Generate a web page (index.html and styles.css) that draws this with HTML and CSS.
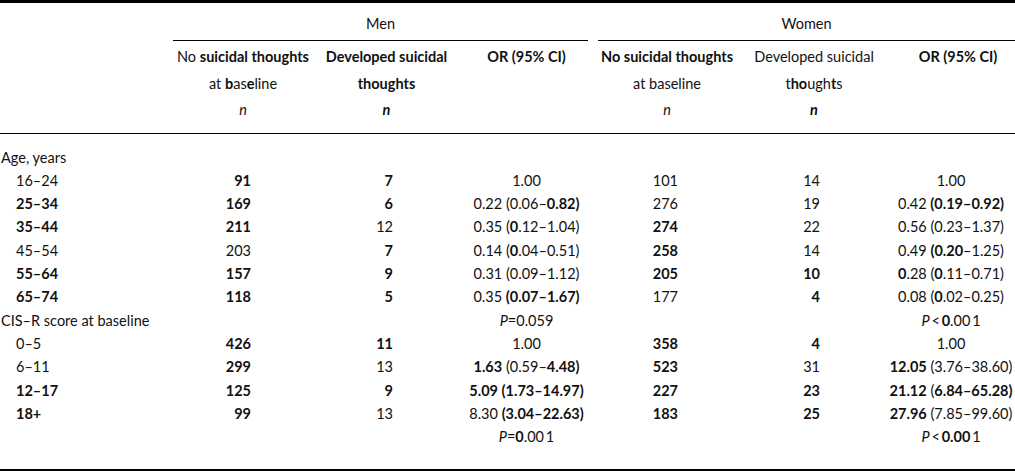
FILE: index.html
```html
<!DOCTYPE html>
<html>
<head>
<meta charset="utf-8">
<link rel="stylesheet" href="styles.css">
</head>
<body>
<table class="tbl">
  <colgroup>
    <col class="c0"><col class="c1"><col class="c2"><col class="c3"><col class="c4"><col class="c5"><col class="c6">
  </colgroup>
  <thead>
    <tr class="grp">
      <th></th>
      <th colspan="3"><div class="grp-men">Men</div></th>
      <th colspan="3"><div class="grp-women">Women</div></th>
    </tr>
    <tr class="sub">
      <th></th>
      <th class="h1">No <b>suicidal thoughts</b><br>at <b>b</b>as<b>e</b>line<br><i>n</i></th>
      <th class="h2"><b>Developed suicidal</b><br><b>thoughts</b><br><i class="bi">n</i></th>
      <th class="h3"><b>OR (95% CI)</b></th>
      <th class="h4"><b>No suicidal thoughts</b><br>at baseline<br><i>n</i></th>
      <th class="h5">Developed suicidal<br>t<b>ho</b>ugh<b>t</b>s<br><i class="bi">n</i></th>
      <th class="h6"><b>OR (95% CI)</b></th>
    </tr>
  </thead>
  <tbody>
    <tr class="first"><td class="lab">Age, years</td><td></td><td></td><td></td><td></td><td></td><td></td></tr>
    <tr><td class="ind">16–24</td><td class="n1 b">91</td><td class="n2 b">7</td><td class="or1">1.00</td><td class="n4">101</td><td class="n5">14</td><td class="or2">1.00</td></tr>
    <tr><td class="ind b">25–34</td><td class="n1 b">169</td><td class="n2 b">6</td><td class="or1">0.22 (0.06–<b>0.82)</b></td><td class="n4">276</td><td class="n5">19</td><td class="or2">0.42 <b>(0.19–0.92)</b></td></tr>
    <tr><td class="ind b">35–44</td><td class="n1 b">211</td><td class="n2">12</td><td class="or1">0.35 (<b>0</b>.12–1.04)</td><td class="n4 b">274</td><td class="n5">22</td><td class="or2">0.56 (0.23–1.37)</td></tr>
    <tr><td class="ind">45–54</td><td class="n1">203</td><td class="n2 b">7</td><td class="or1">0.14 (<b>0</b>.04–0.51)</td><td class="n4 b">258</td><td class="n5">14</td><td class="or2">0.49 <b>(0.20</b>–1.25)</td></tr>
    <tr><td class="ind b">55–64</td><td class="n1 b">157</td><td class="n2 b">9</td><td class="or1">0.31 (0.09–1.12)</td><td class="n4 b">205</td><td class="n5 b">10</td><td class="or2"><b>0</b>.28 (<b>0</b>.11–0.71)</td></tr>
    <tr><td class="ind b">65–74</td><td class="n1 b">118</td><td class="n2 b">5</td><td class="or1">0.35 <b>(0.07–1.67)</b></td><td class="n4">177</td><td class="n5 b">4</td><td class="or2">0.08 (<b>0</b>.02–0.25)</td></tr>
    <tr><td class="lab">CIS–R score at baseline</td><td></td><td></td><td class="or1"><i>P</i>=0.059</td><td></td><td></td><td class="or2"><i>P</i>&thinsp;&lt;&thinsp;<b>0</b>.00&thinsp;1</td></tr>
    <tr><td class="ind">0–5</td><td class="n1 b">426</td><td class="n2 b">11</td><td class="or1">1.00</td><td class="n4 b">358</td><td class="n5 b">4</td><td class="or2">1.00</td></tr>
    <tr><td class="ind">6–11</td><td class="n1 b">299</td><td class="n2">13</td><td class="or1"><b>1.63</b> (0.59–<b>4.48)</b></td><td class="n4 b">523</td><td class="n5">31</td><td class="or2"><b>12.05</b> (3.76–38.60)</td></tr>
    <tr><td class="ind b">12–17</td><td class="n1 b">125</td><td class="n2 b">9</td><td class="or1"><b>5.09 (1.73–14.97)</b></td><td class="n4 b">227</td><td class="n5 b">23</td><td class="or2"><b>21.12</b> (<b>6.84–65.28)</b></td></tr>
    <tr><td class="ind b">18+</td><td class="n1 b">99</td><td class="n2">13</td><td class="or1">8.30 <b>(3.04–22.63)</b></td><td class="n4 b">183</td><td class="n5 b">25</td><td class="or2"><b>27.96</b> (7.85–99.60)</td></tr>
    <tr class="last"><td></td><td></td><td></td><td class="or1"><i>P</i>=<b>0</b>.00&thinsp;1</td><td></td><td></td><td class="or2"><i>P</i>&thinsp;&lt;&thinsp;<b>0.00</b>&thinsp;1</td></tr>
  </tbody>
</table>
</body>
</html>
```

FILE: styles.css
```css
html, body {
  margin: 0;
  padding: 0;
  background: #fff;
}
body {
  font-family: "Lato", "Liberation Sans", sans-serif;
  font-size: 14.5px;
  color: #111;
}
.tbl {
  width: 1015px;
  border-collapse: collapse;
  table-layout: fixed;
  border-top: 3px solid #000;
  border-bottom: 3px solid #000;
}
.c0 { width: 173px; }
.c1 { width: 140px; }
.c2 { width: 147px; }
.c3 { width: 133px; }
.c4 { width: 148px; }
.c5 { width: 134px; }
.c6 { width: 140px; }

th, td {
  padding: 0;
  font-weight: normal;
  white-space: nowrap;
}
b, .b { font-weight: bold; }
.bi { font-weight: bold; }

.grp th {
  height: 37px;
  vertical-align: top;
}
.grp-men, .grp-women {
  text-align: center;
  padding-top: 12px;
  height: 25px;
  line-height: 18px;
  border-bottom: 1px solid #000;
}
.grp-men { margin-right: 5px; }
.grp-women { margin-left: 5px; }

.sub th {
  line-height: 26.5px;
  padding: 3px 0 9px;
  vertical-align: top;
  text-align: center;
  border-bottom: 1px solid #000;
}
.sub .h3 { padding-left: 0; }
.sub .h5 { padding-left: 12px; }
.sub .h6 { padding-left: 26px; }

tbody td {
  height: 23.33px;
  line-height: 23.33px;
}
tbody tr.first td { padding-top: 12px; }
tbody tr.last td { padding-bottom: 20px; }

.lab { padding-left: 1px; }
.ind { padding-left: 16px; }
.n1 { text-align: right; padding-right: 62px; }
.n2 { text-align: right; padding-right: 67px; }
.n4 { text-align: right; padding-right: 63px; }
.n5 { text-align: right; padding-right: 55px; }
.or1 { text-align: center; padding-left: 0; }
.or2 { text-align: center; padding-left: 12px; }
```
